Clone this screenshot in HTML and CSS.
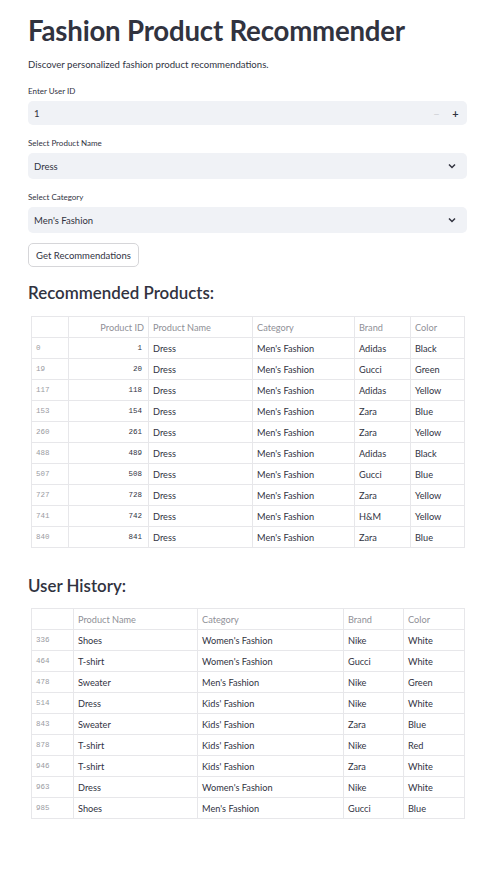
FILE: index.html
```html
<!DOCTYPE html>
<html>
<head>
<meta charset="utf-8">
<link rel="stylesheet" href="styles.css">
</head>
<body>
<main class="page">
  <h1 class="title">Fashion Product Recommender</h1>
  <p class="desc">Discover personalized fashion product recommendations.</p>

  <div class="field">
    <label class="label">Enter User ID</label>
    <div class="box number">
      <span class="value">1</span>
      <span class="step minus">−</span>
      <span class="step plus">+</span>
    </div>
  </div>

  <div class="field">
    <label class="label">Select Product Name</label>
    <div class="box select">
      <span class="value">Dress</span>
      <svg class="chev" width="8" height="6" viewBox="0 0 8 6"><path d="M1 1.5 L4 4.5 L7 1.5" fill="none" stroke="#31333f" stroke-width="1.5"/></svg>
    </div>
  </div>

  <div class="field">
    <label class="label">Select Category</label>
    <div class="box select">
      <span class="value">Men's Fashion</span>
      <svg class="chev" width="8" height="6" viewBox="0 0 8 6"><path d="M1 1.5 L4 4.5 L7 1.5" fill="none" stroke="#31333f" stroke-width="1.5"/></svg>
    </div>
  </div>

  <button class="btn">Get Recommendations</button>

  <h3 class="sub first">Recommended Products:</h3>
  <table class="grid rec">
    <colgroup><col style="width:37px"><col style="width:80px"><col style="width:104px"><col style="width:102px"><col style="width:56px"><col style="width:54px"></colgroup>
    <thead><tr><th></th><th class="r">Product ID</th><th>Product Name</th><th>Category</th><th>Brand</th><th>Color</th></tr></thead>
    <tbody>
      <tr><td class="idx">0</td><td class="num">1</td><td>Dress</td><td>Men's Fashion</td><td>Adidas</td><td>Black</td></tr>
      <tr><td class="idx">19</td><td class="num">20</td><td>Dress</td><td>Men's Fashion</td><td>Gucci</td><td>Green</td></tr>
      <tr><td class="idx">117</td><td class="num">118</td><td>Dress</td><td>Men's Fashion</td><td>Adidas</td><td>Yellow</td></tr>
      <tr><td class="idx">153</td><td class="num">154</td><td>Dress</td><td>Men's Fashion</td><td>Zara</td><td>Blue</td></tr>
      <tr><td class="idx">260</td><td class="num">261</td><td>Dress</td><td>Men's Fashion</td><td>Zara</td><td>Yellow</td></tr>
      <tr><td class="idx">488</td><td class="num">489</td><td>Dress</td><td>Men's Fashion</td><td>Adidas</td><td>Black</td></tr>
      <tr><td class="idx">507</td><td class="num">508</td><td>Dress</td><td>Men's Fashion</td><td>Gucci</td><td>Blue</td></tr>
      <tr><td class="idx">727</td><td class="num">728</td><td>Dress</td><td>Men's Fashion</td><td>Zara</td><td>Yellow</td></tr>
      <tr><td class="idx">741</td><td class="num">742</td><td>Dress</td><td>Men's Fashion</td><td>H&amp;M</td><td>Yellow</td></tr>
      <tr><td class="idx">840</td><td class="num">841</td><td>Dress</td><td>Men's Fashion</td><td>Zara</td><td>Blue</td></tr>
    </tbody>
  </table>

  <h3 class="sub second">User History:</h3>
  <table class="grid hist">
    <colgroup><col style="width:42px"><col style="width:124px"><col style="width:146px"><col style="width:60px"><col style="width:61px"></colgroup>
    <thead><tr><th></th><th>Product Name</th><th>Category</th><th>Brand</th><th>Color</th></tr></thead>
    <tbody>
      <tr><td class="idx">336</td><td>Shoes</td><td>Women's Fashion</td><td>Nike</td><td>White</td></tr>
      <tr><td class="idx">464</td><td>T-shirt</td><td>Women's Fashion</td><td>Gucci</td><td>White</td></tr>
      <tr><td class="idx">478</td><td>Sweater</td><td>Men's Fashion</td><td>Nike</td><td>Green</td></tr>
      <tr><td class="idx">514</td><td>Dress</td><td>Kids' Fashion</td><td>Nike</td><td>White</td></tr>
      <tr><td class="idx">843</td><td>Sweater</td><td>Kids' Fashion</td><td>Zara</td><td>Blue</td></tr>
      <tr><td class="idx">878</td><td>T-shirt</td><td>Kids' Fashion</td><td>Nike</td><td>Red</td></tr>
      <tr><td class="idx">946</td><td>T-shirt</td><td>Kids' Fashion</td><td>Zara</td><td>White</td></tr>
      <tr><td class="idx">963</td><td>Dress</td><td>Women's Fashion</td><td>Nike</td><td>White</td></tr>
      <tr><td class="idx">985</td><td>Shoes</td><td>Men's Fashion</td><td>Gucci</td><td>Blue</td></tr>
    </tbody>
  </table>
</main>
</body>
</html>
```
FILE: styles.css
```css
* { box-sizing: border-box; }
html, body { margin: 0; padding: 0; background: #fff; }
body {
  font-family: Lato, "Liberation Sans", sans-serif;
  color: #31333f;
}
.page {
  padding: 12px 14px 0 28px;
  width: 481px;
}
.title {
  margin: 0;
  height: 38px;
  line-height: 38px;
  font-size: 27.6px;
  font-weight: 700;
  color: #31333f;
  letter-spacing: -0.2px;
}
.desc {
  margin: 8px 0 0 0;
  height: 13px;
  line-height: 13px;
  font-size: 9.6px;
}
.field { margin-top: 15px; }
.field + .field { margin-top: 13px; }
.label {
  display: block;
  font-size: 8px;
  line-height: 11px;
  height: 11px;
  margin-bottom: 4px;
}
.box {
  display: flex;
  align-items: center;
  width: 439px;
  height: 24px;
  background: #f0f2f6;
  border-radius: 5px;
  padding: 0 6px 0 6px;
  font-size: 9.5px;
}
.box.number { padding-right: 2px; }
.box.select { height: 26px; }
.value { flex: 1; }
.step { width: 19px; text-align: center; font-size: 11px; font-weight: 700; }
.minus { color: #d0d2d8; font-weight: 400; }
.plus { color: #31333f; }
.chev { margin-right: 5px; }
.btn {
  display: block;
  margin-top: 10px;
  height: 24px;
  width: 111px;
  padding: 0;
  background: #fff;
  border: 1px solid #d6d6d9;
  border-radius: 5px;
  font-family: inherit;
  font-size: 9.5px;
  color: #31333f;
}
.sub {
  margin: 0;
  font-size: 16.9px;
  font-weight: 600;
  height: 24px;
  line-height: 24px;
}
.sub.first { margin-top: 14px; }
.sub.second { margin-top: 26px; }
.grid {
  border-collapse: collapse;
  table-layout: fixed;
  margin-left: 3px;
  font-size: 9.2px;
}
.grid.rec { margin-top: 11px; width: 433px; }
.grid.hist { margin-top: 10px; width: 433px; }
.grid th, .grid td {
  border: 1px solid #e7e7ea;
  height: 21px;
  padding: 0 4px;
  text-align: left;
  font-weight: 400;
  white-space: nowrap;
  overflow: hidden;
}
.grid th { color: #8f9097; }
.grid th.r { text-align: right; }
.grid td { color: #31333f; }
.grid td.idx {
  font-family: "Liberation Mono", monospace;
  font-size: 7.5px;
  color: #9a9ba2;
}
.grid td.num {
  text-align: right;
  font-family: "Liberation Mono", monospace;
  font-size: 7.5px;
  padding-right: 6px;
}
```
